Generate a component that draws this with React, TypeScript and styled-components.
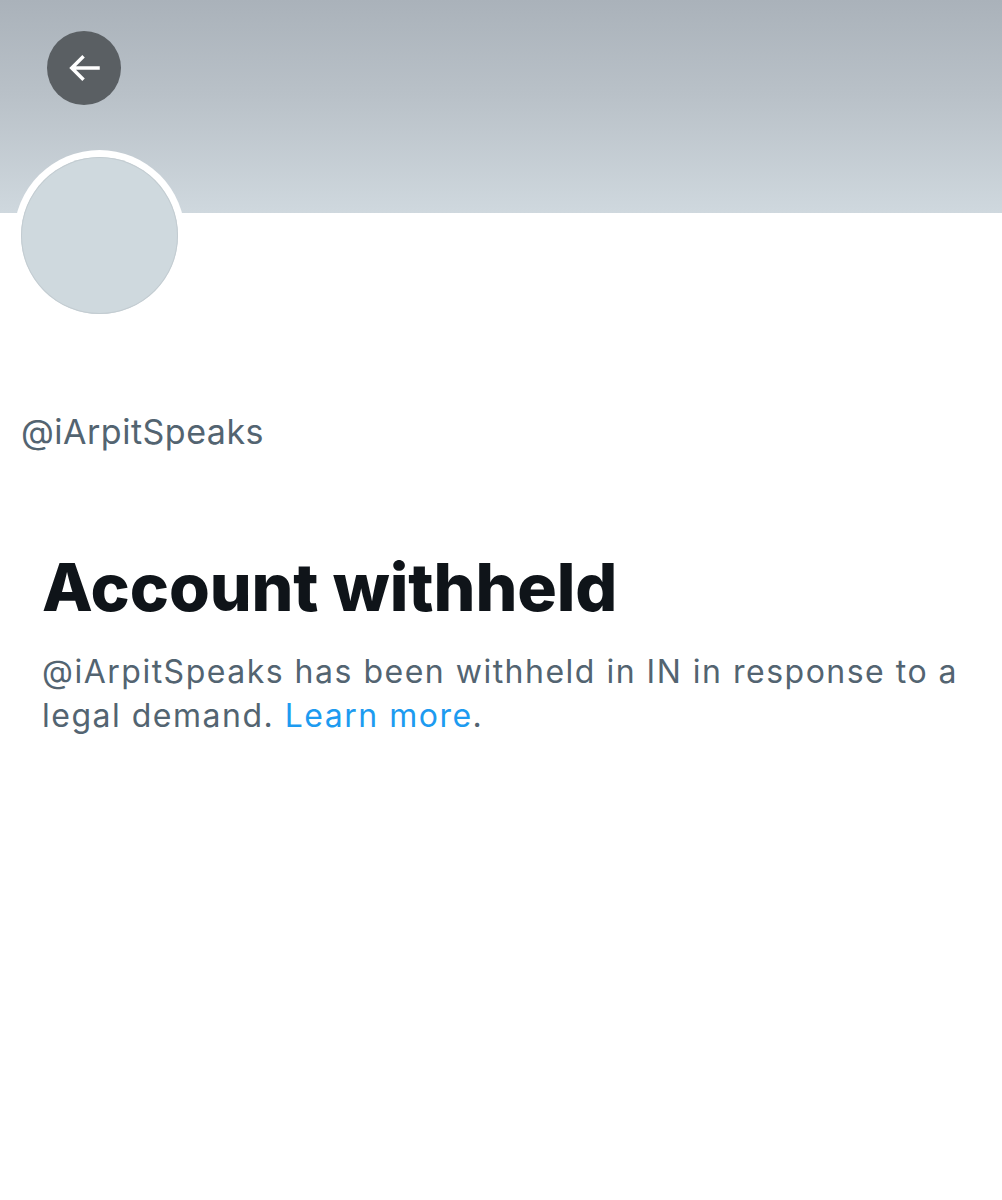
import React from "react";
import styled, { createGlobalStyle } from "styled-components";

const Global = createGlobalStyle`
  html, body { margin: 0; padding: 0; background: #ffffff; }
  body { font-family: Inter, "Liberation Sans", Arial, sans-serif; }
`;

const Page = styled.div`
  width: 1002px;
  min-height: 1200px;
  background: #ffffff;
  display: flex;
  flex-direction: column;
`;

const Banner = styled.header`
  height: 213px;
  background: linear-gradient(180deg, #aab2ba 0%, #b9c1c8 45%, #cfd8de 100%);
  padding: 31px 0 0 47px;
  box-sizing: border-box;
`;

const BackButton = styled.button`
  width: 74px;
  height: 74px;
  border-radius: 50%;
  border: none;
  background: #5a5f63;
  display: flex;
  align-items: center;
  justify-content: center;
  padding: 0;
  cursor: pointer;
`;

const AvatarRing = styled.div`
  margin: -63px 0 0 14px;
  width: 171px;
  height: 171px;
  border-radius: 50%;
  background: #ffffff;
  display: flex;
  align-items: center;
  justify-content: center;
`;

const Avatar = styled.div`
  width: 157px;
  height: 157px;
  border-radius: 50%;
  background: #cfd9de;
  box-shadow: inset 0 0 0 1px #c3ccd1;
`;

const Handle = styled.div`
  margin: 91px 0 0 21px;
  font-size: 34px;
  line-height: 40px;
  letter-spacing: 0.5px;
  color: #536471;
`;

const Notice = styled.section`
  padding: 97px 40px 0 42px;
  display: flex;
  flex-direction: column;
  gap: 25px;
`;

const Title = styled.h1`
  margin: 0;
  font-weight: 800;
  font-size: 66px;
  line-height: 76px;
  letter-spacing: -0.1px;
  color: #0f1419;
`;

const Body = styled.p`
  margin: 0;
  font-size: 32px;
  line-height: 44px;
  letter-spacing: 1.5px;
  color: #536471;
`;

const Link = styled.a`
  color: #1d9bf0;
  text-decoration: none;
`;

export default function App() {
  return (
    <Page>
      <Global />
      <Banner>
        <BackButton aria-label="Back">
          <svg width="42" height="42" viewBox="0 0 24 24" fill="#ffffff">
            <path d="M7.414 13l5.043 5.04-1.414 1.42L3.586 12l7.457-7.46 1.414 1.42L7.414 11H21v2H7.414z" />
          </svg>
        </BackButton>
      </Banner>
      <AvatarRing>
        <Avatar />
      </AvatarRing>
      <Handle>@iArpitSpeaks</Handle>
      <Notice>
        <Title>Account withheld</Title>
        <Body>
          @iArpitSpeaks has been withheld in IN in response to a legal demand.{" "}
          <Link href="#">Learn more</Link>.
        </Body>
      </Notice>
    </Page>
  );
}
